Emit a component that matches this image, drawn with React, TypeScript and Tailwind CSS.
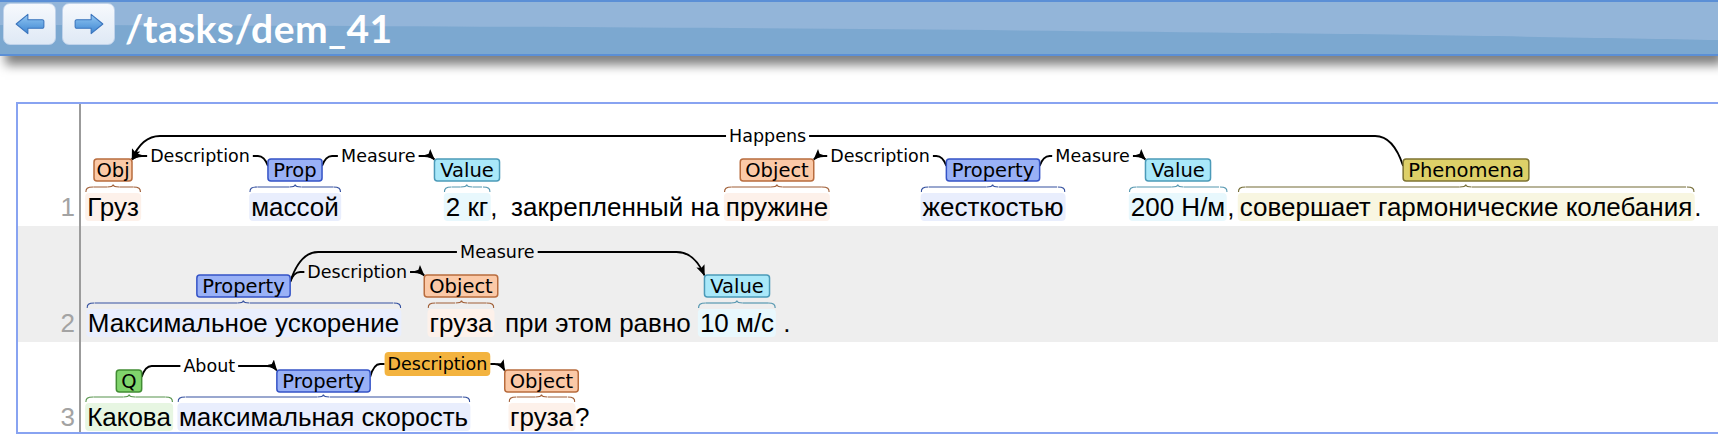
import React from 'react';

// DejaVu Sans advance widths (em) for the label glyphs we need
const DJ: Record<string, number> = {
  O: 0.787, b: 0.635, j: 0.278, P: 0.603, r: 0.411, o: 0.612, p: 0.635, V: 0.684, a: 0.613,
  l: 0.278, u: 0.634, e: 0.615, c: 0.55, t: 0.392, y: 0.592, h: 0.634, n: 0.634, m: 0.974,
  Q: 0.787, D: 0.77, s: 0.521, i: 0.278, M: 0.863, H: 0.752, A: 0.684,
};
const textW = (s: string, size: number) => s.split('').reduce((w, ch) => w + (DJ[ch] ?? 0.6), 0) * size;

const BOX_FONT = 19.5;
const ARC_FONT = 17.5;
const BOX_H = 22;
const BOX_PAD = 5;
const ORIGIN_X = 81;

type Kind = 'obj' | 'prop' | 'value' | 'phen' | 'q';

const KINDS: Record<Kind, { fill: string; stroke: string; brace: string; hl: string }> = {
  obj: { fill: '#fbc9a7', stroke: '#b86c3e', brace: '#a05e36', hl: 'bg-[#fdf1ea]' },
  prop: { fill: '#99b1f6', stroke: '#3553c6', brace: '#34509f', hl: 'bg-[#e9eefd]' },
  value: { fill: '#a9e8f9', stroke: '#4b9ab8', brace: '#5597b0', hl: 'bg-[#e8f8fd]' },
  phen: { fill: '#ddd068', stroke: '#7d7332', brace: '#736b35', hl: 'bg-[#f8f6e1]' },
  q: { fill: '#80d46c', stroke: '#418c33', brace: '#57944c', hl: 'bg-[#e7f6e2]' },
};

type Span = { id: string; label: string; kind: Kind; cx: number; w?: number };
type WordDef = { text: string; x?: number; span?: string; after?: string };
type Arc = { from: string; to: string; label: string; level: number; high?: boolean; boxed?: boolean };
type RowDef = {
  num: number;
  top: number;
  h: number;
  boxTop: number;
  baseline: number;
  rowClass: string;
  numClass: string;
  spans: Span[];
  words: WordDef[];
  arcs: Arc[];
};

const ROWS: RowDef[] = [
  {
    num: 1,
    top: 104,
    h: 122,
    boxTop: 159,
    baseline: 216,
    rowClass: 'h-[122px] bg-white',
    numClass: 'pb-[5px]',
    spans: [
      { id: 'o1', label: 'Obj', kind: 'obj', cx: 113, w: 38 },
      { id: 'p1', label: 'Prop', kind: 'prop', cx: 295 },
      { id: 'v1', label: 'Value', kind: 'value', cx: 467 },
      { id: 'o2', label: 'Object', kind: 'obj', cx: 777 },
      { id: 'p2', label: 'Property', kind: 'prop', cx: 993 },
      { id: 'v2', label: 'Value', kind: 'value', cx: 1178 },
      { id: 'ph', label: 'Phenomena', kind: 'phen', cx: 1466 },
    ],
    words: [
      { text: 'Груз', span: 'o1' },
      { text: 'массой', span: 'p1' },
      { text: '2 кг', span: 'v1', after: ',' },
      { text: 'закрепленный на', x: 511 },
      { text: 'пружине', span: 'o2' },
      { text: 'жесткостью', span: 'p2' },
      { text: '200 Н/м', span: 'v2', after: ',' },
      { text: 'совершает гармонические колебания', span: 'ph', after: '.' },
    ],
    arcs: [
      { from: 'ph', to: 'o1', label: 'Happens', level: 136, high: true },
      { from: 'p1', to: 'o1', label: 'Description', level: 156 },
      { from: 'p1', to: 'v1', label: 'Measure', level: 156 },
      { from: 'p2', to: 'o2', label: 'Description', level: 156 },
      { from: 'p2', to: 'v2', label: 'Measure', level: 156 },
    ],
  },
  {
    num: 2,
    top: 226,
    h: 116,
    boxTop: 275,
    baseline: 332,
    rowClass: 'h-[116px] bg-[#eeeeee]',
    numClass: 'pb-[5px]',
    spans: [
      { id: 'p', label: 'Property', kind: 'prop', cx: 243.5 },
      { id: 'o', label: 'Object', kind: 'obj', cx: 461 },
      { id: 'v', label: 'Value', kind: 'value', cx: 737 },
    ],
    words: [
      { text: 'Максимальное ускорение', span: 'p' },
      { text: 'груза', span: 'o' },
      { text: 'при этом равно', x: 505 },
      { text: '10 м/с', span: 'v', after: ' .' },
    ],
    arcs: [
      { from: 'p', to: 'o', label: 'Description', level: 272 },
      { from: 'p', to: 'v', label: 'Measure', level: 252, high: true },
    ],
  },
  {
    num: 3,
    top: 342,
    h: 90,
    boxTop: 370,
    baseline: 426,
    rowClass: 'h-[90px] bg-white',
    numClass: 'pb-[1px]',
    spans: [
      { id: 'q', label: 'Q', kind: 'q', cx: 129 },
      { id: 'p', label: 'Property', kind: 'prop', cx: 323.5 },
      { id: 'o', label: 'Object', kind: 'obj', cx: 541.5 },
    ],
    words: [
      { text: 'Какова', span: 'q' },
      { text: 'максимальная скорость', span: 'p' },
      { text: 'груза', span: 'o', after: '?' },
    ],
    arcs: [
      { from: 'q', to: 'p', label: 'About', level: 366 },
      { from: 'p', to: 'o', label: 'Description', level: 364, boxed: true },
    ],
  },
];

const boxW = (s: Span) => s.w ?? textW(s.label, BOX_FONT) + BOX_PAD * 2;

function Brace({ color }: { color: string }) {
  return (
    <span className="absolute left-0 right-0 bottom-full mb-px flex h-[8px]">
      <svg width="8" height="8" className="shrink-0">
        <path d="M0.7 8 C0.7 4.5 2 3 8 3" fill="none" stroke={color} strokeWidth="1.2" />
      </svg>
      <svg className="flex-1" height="8" viewBox="0 0 10 8" preserveAspectRatio="none">
        <line x1="0" y1="3" x2="10" y2="3" stroke={color} strokeWidth="1.2" vectorEffect="non-scaling-stroke" />
      </svg>
      <svg width="12" height="8" className="shrink-0">
        <path d="M0 3 C3.5 3 6 2.6 6 0.5 C6 2.6 8.5 3 12 3" fill="none" stroke={color} strokeWidth="1.2" />
      </svg>
      <svg className="flex-1" height="8" viewBox="0 0 10 8" preserveAspectRatio="none">
        <line x1="0" y1="3" x2="10" y2="3" stroke={color} strokeWidth="1.2" vectorEffect="non-scaling-stroke" />
      </svg>
      <svg width="8" height="8" className="shrink-0">
        <path d="M0 3 C6 3 7.3 4.5 7.3 8" fill="none" stroke={color} strokeWidth="1.2" />
      </svg>
    </span>
  );
}

function ArcView({ arc, row }: { arc: Arc; row: RowDef }) {
  const A = row.spans.find((s) => s.id === arc.from)!;
  const B = row.spans.find((s) => s.id === arc.to)!;
  const fromIsLeft = A.cx < B.cx;
  const left = fromIsLeft ? A : B;
  const right = fromIsLeft ? B : A;
  const lx = left.cx + boxW(left) / 2;
  const rx = right.cx - boxW(right) / 2;
  const lc = (lx + rx) / 2;
  const tw = textW(arc.label, ARC_FONT);
  const half = tw / 2 + 3;
  const L = arc.level;
  const slant = arc.high ? 28 : 10;
  const k = slant * 0.35;
  const yL = fromIsLeft ? row.boxTop + 7 : row.boxTop + 0.5;
  const yR = fromIsLeft ? row.boxTop + 0.5 : row.boxTop + 7;
  const leftPath = `M${lc - half} ${L} L${lx + slant} ${L} Q${lx + k} ${L} ${lx} ${yL}`;
  const rightPath = `M${lc + half} ${L} L${rx - slant} ${L} Q${rx - k} ${L} ${rx} ${yR}`;
  const marker = `url(#arrow-${row.num})`;
  return (
    <g>
      <path d={leftPath} fill="none" stroke="#000" strokeWidth="1.8" markerEnd={fromIsLeft ? undefined : marker} />
      <path d={rightPath} fill="none" stroke="#000" strokeWidth="1.8" markerEnd={fromIsLeft ? marker : undefined} />
      {arc.boxed && <rect x={lc - half} y={L - 12} width={half * 2} height={24} rx={4} fill="#f3b33f" />}
      <text x={lc} y={L + 6} textAnchor="middle" fontFamily="DejaVu Sans" fontSize={ARC_FONT} fill="#000">
        {arc.label}
      </text>
    </g>
  );
}

function Row({ row }: { row: RowDef }) {
  const top = row.baseline - 23 - row.top;
  return (
    <div className={`flex ${row.rowClass}`}>
      <div
        className={`flex w-[63px] shrink-0 flex-col items-end justify-end border-r-2 border-[#9b9b9b] pr-[4px] font-['Liberation_Sans',Arial,sans-serif] text-[26px] leading-[28px] text-[#a3a3a3] ${row.numClass}`}
      >
        {row.num}
      </div>
      <div className="relative flex-1 font-['Liberation_Sans',Arial,sans-serif] text-[26px] leading-[28px] text-black">
        <svg className="absolute inset-0" width="100%" height="100%" viewBox={`${ORIGIN_X} ${row.top} 1637 ${row.h}`}>
          <defs>
            <marker
              id={`arrow-${row.num}`}
              viewBox="0 0 10 8"
              refX="9.5"
              refY="4"
              markerWidth="11"
              markerHeight="9"
              markerUnits="userSpaceOnUse"
              orient="auto"
            >
              <path d="M0 0 L10 4 L0 8 L2 4 Z" fill="#000" />
            </marker>
          </defs>
          {row.arcs.map((a, i) => (
            <ArcView key={i} arc={a} row={row} />
          ))}
          {row.spans.map((s) => {
            const w = boxW(s);
            const k = KINDS[s.kind];
            return (
              <g key={s.id}>
                <rect
                  x={s.cx - w / 2}
                  y={row.boxTop}
                  width={w}
                  height={BOX_H}
                  rx={3}
                  fill={k.fill}
                  stroke={k.stroke}
                  strokeWidth="1.5"
                />
                <text
                  x={s.cx}
                  y={row.boxTop + 17.5}
                  textAnchor="middle"
                  fontFamily="DejaVu Sans"
                  fontSize={BOX_FONT}
                  fill="#000"
                >
                  {s.label}
                </text>
              </g>
            );
          })}
        </svg>

        {row.words.map((w, i) => {
          if (!w.span) {
            return (
              <span key={i} className="absolute whitespace-pre" style={{ left: w.x! - ORIGIN_X, top }}>
                {w.text}
              </span>
            );
          }
          const s = row.spans.find((sp) => sp.id === w.span)!;
          const k = KINDS[s.kind];
          return (
            <span key={i} className="absolute -translate-x-1/2 whitespace-pre" style={{ left: s.cx - ORIGIN_X, top }}>
              <span className={`relative inline-block rounded-[4px] px-[2px] ${k.hl}`}>
                <Brace color={k.brace} />
                {w.text}
                {w.after && <span className="absolute left-full top-0 whitespace-pre">{w.after}</span>}
              </span>
            </span>
          );
        })}
      </div>
    </div>
  );
}

function NavArrow({ dir }: { dir: 'left' | 'right' }) {
  const gid = `nav-${dir}`;
  return (
    <svg width="32" height="24" viewBox="0 0 30 22">
      <defs>
        <linearGradient id={gid} x1="0" y1="0" x2="0" y2="1">
          <stop offset="0" stopColor="#93c8f3" />
          <stop offset="1" stopColor="#3d85d1" />
        </linearGradient>
      </defs>
      <path
        d="M2 11 L13 2 V7 H26.5 a1.5 1.5 0 0 1 1.5 1.5 V13.5 a1.5 1.5 0 0 1 -1.5 1.5 H13 V20 Z"
        fill={`url(#${gid})`}
        stroke="#3a74bd"
        strokeWidth="1"
        strokeLinejoin="round"
        transform={dir === 'right' ? 'translate(30 0) scale(-1 1)' : undefined}
      />
    </svg>
  );
}

function Header() {
  return (
    <div className="relative z-10 flex h-[56px] items-start border-y-2 border-[#5b8fd6] bg-[#7ca8d0] pl-[3px] pt-px shadow-[5px_9px_10px_rgba(0,0,0,0.5)]">
      <svg className="absolute inset-0" width="100%" height="100%" viewBox="0 0 1718 52" preserveAspectRatio="none">
        <path d="M0 0 H1718 V38 C1500 34 1000 25 0 23 Z" fill="#93b5d9" />
      </svg>
      <div className="relative flex gap-[6px]">
        <button className="flex h-[42px] w-[53px] items-center justify-center rounded-[7px] border border-[#bfd2ea] bg-gradient-to-b from-[#f6f9fd] to-[#dfe9f5]">
          <NavArrow dir="left" />
        </button>
        <button className="flex h-[42px] w-[53px] items-center justify-center rounded-[7px] border border-[#bfd2ea] bg-gradient-to-b from-[#f6f9fd] to-[#dfe9f5]">
          <NavArrow dir="right" />
        </button>
      </div>
      <div className="relative ml-[10px] mt-[5px] font-['Lato',sans-serif] text-[39px] font-bold leading-[40px] tracking-[0.4px] text-white">
        /tasks/dem_41
      </div>
    </div>
  );
}

export default function App() {
  return (
    <div className="h-[446px] w-[1718px] overflow-hidden bg-white">
      <Header />
      <div className="ml-4 mt-[46px] border-2 border-r-0 border-[#88a3f1]">
        {ROWS.map((r) => (
          <Row key={r.num} row={r} />
        ))}
      </div>
    </div>
  );
}
